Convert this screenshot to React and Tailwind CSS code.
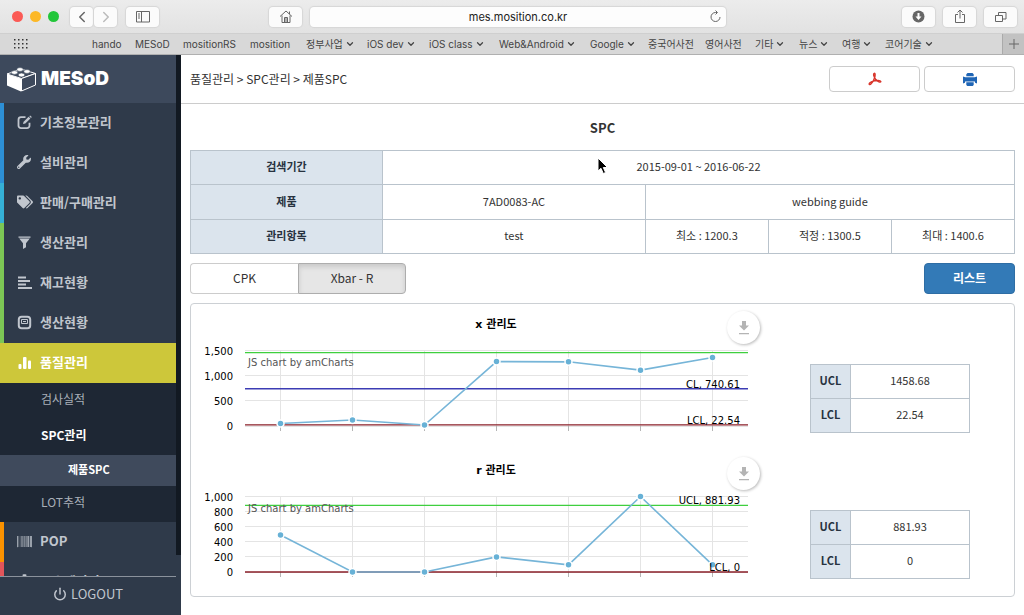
import React, { useState } from "react";
import { ChevronLeft, ChevronRight, ChevronDown, Power } from "lucide-react";
import { FaWrench, FaTags, FaBarcode, FaCog } from "react-icons/fa";

// Browser bookmarks
const bookmarks = [
  { label: "hando", width: "w-[43px]" },
  { label: "MESoD", width: "w-[48px]" },
  { label: "mositionRS", width: "w-[67px]" },
  { label: "mosition", width: "w-[56px]" },
  { label: "정부사업", width: "w-[61px]", menu: true },
  { label: "iOS dev", width: "w-[62px]", menu: true },
  { label: "iOS class", width: "w-[70px]", menu: true },
  { label: "Web&Android", width: "w-[91px]", menu: true },
  { label: "Google", width: "w-[58px]", menu: true },
  { label: "중국어사전", width: "w-[57px]" },
  { label: "영어사전", width: "w-[50px]" },
  { label: "기타", width: "w-[44px]", menu: true },
  { label: "뉴스", width: "w-[43px]", menu: true },
  { label: "여행", width: "w-[43px]", menu: true },
  { label: "코어기술", width: "w-[50px]", menu: true },
];

// Menu icons
const EditIcon = () => (
  <svg width="15" height="15" viewBox="0 0 15 15" fill="none" stroke="currentColor">
    <path d="M8.5 2.2H4A2.5 2.5 0 0 0 1.5 4.7v6A2.5 2.5 0 0 0 4 13.2h6a2.5 2.5 0 0 0 2.5-2.5V7.8" strokeWidth="1.8" />
    <path d="M6 9l.6-2.2 5-5 1.8 1.7-5.1 5z" fill="currentColor" stroke="none" />
    <path d="M12.3 1.2l.8-.8 1.7 1.7-.8.8z" fill="currentColor" stroke="none" />
  </svg>
);

const FilterIcon = () => (
  <svg width="15" height="15" viewBox="0 0 15 15" fill="currentColor">
    <path d="M1.5 1.5h12v1.2h-12zM2.2 3.6h10.6L9 8.2v4L6 14V8.2z" />
  </svg>
);

const AlignIcon = () => (
  <svg width="15" height="15" viewBox="0 0 15 15" fill="currentColor">
    <path d="M1 1.5h8v2H1zM1 5h12v2H1zM1 8.5h8v2H1zM1 12h14v2H1z" />
  </svg>
);

const MonitorIcon = () => (
  <svg width="15" height="15" viewBox="0 0 15 15" fill="none" stroke="currentColor">
    <rect x="1.8" y="1.8" width="11.4" height="11.4" rx="2.8" strokeWidth="2" />
    <path d="M4.5 4.5h6v4h-6zM6 6.5h3" />
  </svg>
);

const StatsIcon = () => (
  <svg width="15" height="15" viewBox="0 0 15 15" fill="currentColor">
    <rect x="1.5" y="9" width="3" height="5" rx="1" />
    <rect x="6" y="2" width="3.5" height="12" rx="1" />
    <rect x="11" y="5.5" width="3" height="8.5" rx="1" />
  </svg>
);

const menuItems = [
  { label: "기초정보관리", icon: <EditIcon />, bar: "bg-[#2d8fd5]" },
  { label: "설비관리", icon: <FaWrench size={14} />, bar: "bg-[#2d8fd5]" },
  { label: "판매/구매관리", icon: <FaTags size={16} />, bar: "bg-[#35b0d6]" },
  { label: "생산관리", icon: <FilterIcon />, bar: "bg-[#7cc655]" },
  { label: "재고현황", icon: <AlignIcon />, bar: "bg-[#7cc655]" },
  { label: "생산현황", icon: <MonitorIcon />, bar: "bg-[#7cc655]" },
  { label: "품질관리", icon: <StatsIcon />, bar: "bg-[#cdc73a]", active: true },
];

const MenuItem = ({ icon, label, bar, active }) => (
  <a
    href="#"
    className={`flex h-10 shrink-0 items-stretch text-[13px] font-bold ${
      active ? "bg-[#cdc73a] text-white" : "bg-[#2f3a4a] text-[#c1c6ce]"
    }`}
  >
    <span className={`w-1 ${bar}`} />
    <span className="ml-[13px] flex w-[23px] items-center pb-0.5">{icon}</span>
    <span className="flex items-center pb-0.5">{label}</span>
  </a>
);

const SubItem = ({ label, active }) => (
  <a
    href="#"
    className={`flex h-9 shrink-0 items-center pb-1 pl-[41px] text-xs ${
      active ? "font-bold text-white" : "text-[#a9afb8]"
    }`}
  >
    {label}
  </a>
);

const ToolButton = ({ label, className = "", children }) => (
  <button
    aria-label={label}
    className={`flex h-5 items-center justify-center rounded-[4px] bg-[#fbfbfb] text-[#666] shadow-[0_0_1px_1px_#d6d6d6] ${className}`}
  >
    {children}
  </button>
);

const BrowserBar = () => (
  <header className="shrink-0 text-[#444] font-[Inter,'Noto_Sans_CJK_KR',sans-serif]">
    <div className="flex h-[33px] items-center bg-linear-to-b from-[#ececec] to-[#e2e2e2] pr-[7px] pl-3">
      <div className="flex gap-[7px]">
        <span className="size-[11px] rounded-full bg-[#fb5a55]" />
        <span className="size-[11px] rounded-full bg-[#fcb827]" />
        <span className="size-[11px] rounded-full bg-[#22c63a]" />
      </div>
      <div className="ml-[11px] flex gap-px">
        <ToolButton label="Back" className="w-[23px]">
          <ChevronLeft size={18} strokeWidth={2} />
        </ToolButton>
        <ToolButton label="Forward" className="w-[23px] text-[#bbb]">
          <ChevronRight size={18} strokeWidth={2} />
        </ToolButton>
      </div>
      <ToolButton label="Sidebar" className="ml-[9px] w-[33px]">
        <svg width="14" height="12" viewBox="0 0 14 12" fill="none" stroke="currentColor">
          <path d="M.5.5h13v10.5h-13zM5.5.5v10.5M2 3h2M2 5h2M2 7h2" />
        </svg>
      </ToolButton>
      <ToolButton label="Home" className="ml-[110px] w-[33px]">
        <svg width="14" height="13" viewBox="0 0 14 13" fill="none" stroke="currentColor">
          <path d="M1 6.5l6-5.5 6 5.5M3 5.5v7h8v-7M10.5 4V1.5" />
          <path d="M5.5 12V7.5h3V12M7 8v4" />
        </svg>
      </ToolButton>
      <div className="relative ml-2 flex-1">
        <input
          aria-label="Address"
          defaultValue="mes.mosition.co.kr"
          className="block h-5 w-full rounded-[4px] bg-[#fdfdfd] px-6 text-center text-[11px] text-[#222] shadow-[0_0_1px_1px_#d6d6d6] outline-none"
        />
        <button aria-label="Reload" className="absolute top-[3px] right-1 text-[#666]">
          <svg width="13" height="13" viewBox="0 0 13 13" fill="none" stroke="currentColor">
            <path d="M11 7A4.5 4.5 0 1 1 6.5 2.5H8M6.5.5l2 2-2 2" />
          </svg>
        </button>
      </div>
      <ToolButton label="Downloads" className="ml-44 w-[33px]">
        <svg width="13" height="13" viewBox="0 0 13 13">
          <circle cx="6.5" cy="6.5" r="6" fill="currentColor" />
          <path d="M5.5 3h2v3.5h2l-3 3.5-3-3.5h2z" fill="#fff" />
        </svg>
      </ToolButton>
      <ToolButton label="Share" className="ml-2 w-[33px]">
        <svg width="12" height="15" viewBox="0 0 12 15" fill="none" stroke="currentColor">
          <path d="M4 5.5H1.5v8h9v-8H8M6 9.5v-8M3.5 3.5L6 1l2.5 2.5" />
        </svg>
      </ToolButton>
      <ToolButton label="Tabs" className="ml-2 w-[33px]">
        <svg width="12" height="12" viewBox="0 0 12 12" fill="none" stroke="currentColor">
          <path d="M.5 4.5h7v6h-7zM3.500 4.500v-3h7.500v6.500H7.500" />
        </svg>
      </ToolButton>
    </div>
    <nav className="flex h-[22px] items-center border-t border-b border-t-[#cfcfcf] border-b-[#b0b0b0] bg-[#d8d8d8] text-[10px]">
      <svg className="ml-3.5 shrink-0" width="14" height="10" viewBox="0 0 14 10" fill="#333">
        {[0, 4, 8, 12].map((x) =>
          [0, 4, 8].map((y) => <rect key={`${x}-${y}`} x={x} y={y} width="1.5" height="1.5" />)
        )}
      </svg>
      <div className="ml-16 flex flex-1 whitespace-nowrap">
        {bookmarks.map((b) => (
          <a key={b.label} href="#" className={`flex shrink-0 items-center gap-0.5 ${b.width}`}>
            {b.label}
            {b.menu && <ChevronDown size={10} strokeWidth={3} />}
          </a>
        ))}
      </div>
      <button
        aria-label="New tab"
        className="flex w-[22px] items-center justify-center self-stretch border-l border-[#aaa] bg-[#c2c2c2] text-[#666]"
      >
        <svg width="10" height="10" viewBox="0 0 10 10" stroke="currentColor">
          <path d="M5 0v10M0 5h10" />
        </svg>
      </button>
    </nav>
  </header>
);

const Logo = () => (
  <a href="#" aria-label="MESoD" className="flex h-12 shrink-0 items-center bg-[#3d495c] pl-[7px]">
    <svg width="29" height="25" viewBox="0 0 29 25">
      <path d="M0 7l14 4.5v13L0 18.5z" fill="#fff" />
      <path d="M0 7l14-5 14.5 4.5-14 5z" fill="#3d495c" stroke="#fff" />
      <path d="M14.5 11.5l14-5V18l-14 6z" fill="#3d495c" stroke="#fff" />
      <g fill="#fff" stroke="#3d495c" strokeWidth=".6">
        <ellipse cx="13" cy="2.5" rx="3.2" ry="1.9" />
        <ellipse cx="20" cy="4.5" rx="3.2" ry="1.9" />
        <ellipse cx="7.5" cy="5.5" rx="3.2" ry="1.9" />
        <ellipse cx="14.5" cy="8" rx="3.2" ry="1.9" />
      </g>
    </svg>
    <span className="ml-[5px] font-[Inter,sans-serif] text-[19px] font-black text-white">MESoD</span>
  </a>
);

const Sidebar = () => (
  <aside className="flex w-[181px] shrink-0">
    <div className="flex min-w-0 flex-1 flex-col bg-[#1e2734]">
      <Logo />
      <nav className="flex min-h-0 flex-1 flex-col overflow-hidden">
        {menuItems.map((item) => (
          <MenuItem key={item.label} {...item} />
        ))}
        <SubItem label="검사실적" />
        <SubItem label="SPC관리" active />
        <a
          href="#"
          className="flex h-[31px] shrink-0 items-center bg-[#3f4a5c] pb-0.5 pl-[68px] text-[11px] font-bold text-white"
        >
          제품SPC
        </a>
        <SubItem label="LOT추적" />
        <MenuItem label="POP" icon={<FaBarcode size={15} />} bar="bg-[#fb9200]" />
        <MenuItem label="시스템관리" icon={<FaCog size={15} />} bar="bg-[#e2555a]" />
      </nav>
      <button className="flex h-[39px] shrink-0 items-center justify-center gap-1 border-t border-[#8b929c] bg-[#2f3a4a] pb-1 text-[13px] text-[#c1c6ce]">
        <Power size={14} strokeWidth={2.5} />
        LOGOUT
      </button>
    </div>
    <div className="flex w-[5px] flex-col bg-[#2f3a4a]">
      <div className="mb-[60px] flex-1 bg-[#121922]" />
    </div>
  </aside>
);

// Control charts
const PLOT = { left: 45, right: 548, top: 46.5, bottom: 122, step: 72 };

const charts = [
  {
    id: "x",
    max: 1500,
    ticks: [1500, 1000, 500, 0],
    values: [50, 120, 20, 1280, 1275, 1110, 1360],
    ucl: 1458.68,
    lcl: 22.54,
    cl: 740.61,
  },
  {
    id: "r",
    max: 1000,
    ticks: [1000, 800, 600, 400, 200, 0],
    values: [490, 0, 0, 200, 95, 1000, 95],
    ucl: 881.93,
    lcl: 0,
    uclLabel: true,
  },
];

const ControlChart = ({ id, max, ticks, values, ucl, lcl, cl, uclLabel }) => {
  const toY = (v) => PLOT.bottom - (v / max) * (PLOT.bottom - PLOT.top);
  const toX = (i) => PLOT.left + 35.5 + i * PLOT.step;

  const limits = [
    { name: "UCL", value: ucl, color: "#3fcf3f", label: uclLabel },
    { name: "CL", value: cl, color: "#3c3cb4", label: true },
    { name: "LCL", value: lcl, color: "#8a1f28", label: true },
  ].filter((l) => l.value !== undefined);

  return (
    <div className="relative min-w-0 flex-1">
      <svg viewBox="0 0 570 146" className="block w-full font-['DejaVu_Sans','Noto_Sans_CJK_KR',sans-serif] text-[10px]">
        <text x="296" y="24" textAnchor="middle" className="text-[11px] font-bold">
          {id} 관리도
        </text>
        <g shapeRendering="crispEdges">
          {ticks.map((t) => (
            <path key={t} d={`M${PLOT.left} ${toY(t)}H${PLOT.right}`} stroke="#e4e4e4" />
          ))}
          {values.map((_, i) => (
            <g key={i}>
              <path d={`M${toX(i)} ${PLOT.top}V${PLOT.bottom}`} stroke="#e4e4e4" />
              <path d={`M${toX(i)} ${PLOT.bottom}v5`} stroke="#b5b5b5" />
            </g>
          ))}
        </g>
        {limits.map((l) => (
          <path
            key={l.name}
            d={`M${PLOT.left} ${toY(l.value)}H${PLOT.right}`}
            stroke={l.color}
            strokeWidth="1.4"
          />
        ))}
        {ticks.map((t) => (
          <text key={t} x="33" y={toY(t) + 4} textAnchor="end">
            {t.toLocaleString("en-US")}
          </text>
        ))}
        <polyline
          points={values.map((v, i) => `${toX(i)},${toY(v)}`).join(" ")}
          fill="none"
          stroke="#76b5d8"
          strokeWidth="1.6"
        />
        {values.map((v, i) => (
          <circle key={i} cx={toX(i)} cy={toY(v)} r="3.5" fill="#67b1d6" stroke="#fff" strokeWidth="1.5" />
        ))}
        {limits
          .filter((l) => l.label)
          .map((l) => (
            <text key={l.name} x="540" y={toY(l.value) - 1} textAnchor="end">
              {l.name}, {l.value}
            </text>
          ))}
        <text x="48" y="62" fill="#555">
          JS chart by amCharts
        </text>
      </svg>
      <button
        aria-label="Download"
        className="absolute top-[7px] right-[10px] flex size-[33px] items-center justify-center rounded-full bg-white shadow-[1px_1px_3px_#bbb]"
      >
        <svg width="12" height="14" viewBox="0 0 12 14" fill="#b4b4b4">
          <path d="M4 0h4v4.5h3l-5 5-5-5h3zM1 12h10v1.2H1z" />
        </svg>
      </button>
    </div>
  );
};

const Th = ({ children }) => (
  <th scope="row" className="h-[34px] border border-[#b9c3cc] bg-[#dbe4ed] p-0 pb-0.5 text-[11px] font-bold text-[#27323f]">
    {children}
  </th>
);

const Td = ({ children, colSpan }) => (
  <td colSpan={colSpan} className="h-[34px] border border-[#b9c3cc] p-0 pb-0.5 text-center">
    {children}
  </td>
);

const App = () => {
  const [tab, setTab] = useState("xbar");

  const tabClass = (name) =>
    tab === name
      ? "border-[#adadad] bg-[#e6e6e6] shadow-[inset_0_3px_5px_rgba(0,0,0,0.125)]"
      : "border-[#ccc] bg-white";

  return (
    <div className="flex h-screen flex-col overflow-hidden bg-white text-[#333] font-['Noto_Sans_CJK_KR',sans-serif]">
      <BrowserBar />
      <div className="flex min-h-0 flex-1">
        <Sidebar />
        <main className="min-w-0 flex-1">
          {/* Header */}
          <div className="flex h-[49px] items-center justify-between border-b border-[#ccc] px-[9px]">
            <p className="text-xs">품질관리 &gt; SPC관리 &gt; 제품SPC</p>
            <div className="flex gap-1">
              <button
                aria-label="PDF"
                className="flex h-[26px] w-[91px] items-center justify-center rounded-[4px] border border-[#ccc] bg-white"
              >
                <svg width="14" height="14" viewBox="0 0 14 14" fill="none" stroke="#d8352b" strokeWidth="1.4">
                  <path d="M6 1.5c1.6-1 1.2 2.5.6 4.3C5.8 8.3 3.4 12.8 1.6 12.6.2 12 2.2 9.7 6.5 8.800c3-.6 6-.4 6.300.6.3 1.500-3.600.4-5.300-2.300C6.400 5.500 5.200 2.400 6 1.500z" />
                </svg>
              </button>
              <button
                aria-label="Print"
                className="flex h-[26px] w-[91px] items-center justify-center rounded-[4px] border border-[#ccc] bg-white"
              >
                <svg width="14" height="13" viewBox="0 0 14 13" fill="#1f65b5">
                  <path d="M4.5 0h5l1.200 1.200V3.300H3.300V1.200zM0 3.500l2.300.8h9.400l2.300-.8v7l-2-.8V8.600H2v1.100l-2 .8zM3.300 9.300h7.400V12l-1 1H4.300l-1-1z" />
                </svg>
              </button>
            </div>
          </div>

          <div className="px-[9px]">
            <h1 className="pt-3.5 pb-3 text-center text-[13px] leading-5 font-bold">SPC</h1>

            <table className="h-[104px] w-full table-fixed border-collapse text-[11px]">
              <colgroup>
                <col className="w-[23.3%]" />
                <col className="w-[31.9%]" />
                <col />
                <col />
                <col />
              </colgroup>
              <tbody>
                <tr>
                  <Th>검색기간</Th>
                  <Td colSpan={4}>2015-09-01 ~ 2016-06-22</Td>
                </tr>
                <tr>
                  <Th>제품</Th>
                  <Td>7AD0083-AC</Td>
                  <Td colSpan={3}>webbing guide</Td>
                </tr>
                <tr>
                  <Th>관리항목</Th>
                  <Td>test</Td>
                  <Td>최소 : 1200.3</Td>
                  <Td>적정 : 1300.5</Td>
                  <Td>최대 : 1400.6</Td>
                </tr>
              </tbody>
            </table>

            <div className="flex justify-between py-[9px] text-xs">
              <div className="flex">
                <button
                  onClick={() => setTab("cpk")}
                  className={`h-[31px] w-[108px] rounded-l-[4px] border border-r-0 pb-0.5 ${tabClass("cpk")}`}
                >
                  CPK
                </button>
                <button
                  onClick={() => setTab("xbar")}
                  className={`h-[31px] w-[108px] rounded-r-[4px] border pb-0.5 ${tabClass("xbar")}`}
                >
                  Xbar - R
                </button>
              </div>
              <button className="h-[31px] w-[91px] rounded-[4px] border border-[#2e6da4] bg-[#337ab7] pb-0.5 font-bold text-white">
                리스트
              </button>
            </div>

            {/* Charts */}
            <section className="rounded-[4px] border border-[#ccd0d4] pr-11 pl-[9px]">
              {charts.map((c) => (
                <div key={c.id} className="flex items-start gap-10">
                  <ControlChart {...c} />
                  <table className="mt-[60px] w-40 table-fixed border-collapse text-[11px]">
                    <colgroup>
                      <col className="w-10" />
                      <col />
                    </colgroup>
                    <tbody>
                      <tr>
                        <Th>UCL</Th>
                        <Td>{c.ucl}</Td>
                      </tr>
                      <tr>
                        <Th>LCL</Th>
                        <Td>{c.lcl}</Td>
                      </tr>
                    </tbody>
                  </table>
                </div>
              ))}
            </section>
          </div>
        </main>
      </div>

      {/* Mouse pointer */}
      <svg className="pointer-events-none absolute top-[157px] left-[597px]" width="12" height="18" viewBox="0 0 12 18">
        <path d="M1 1v13l3-2.7 2.3 5.2 2.3-1-2.3-5h4.2z" fill="#000" stroke="#fff" />
      </svg>
    </div>
  );
};

export default App;
